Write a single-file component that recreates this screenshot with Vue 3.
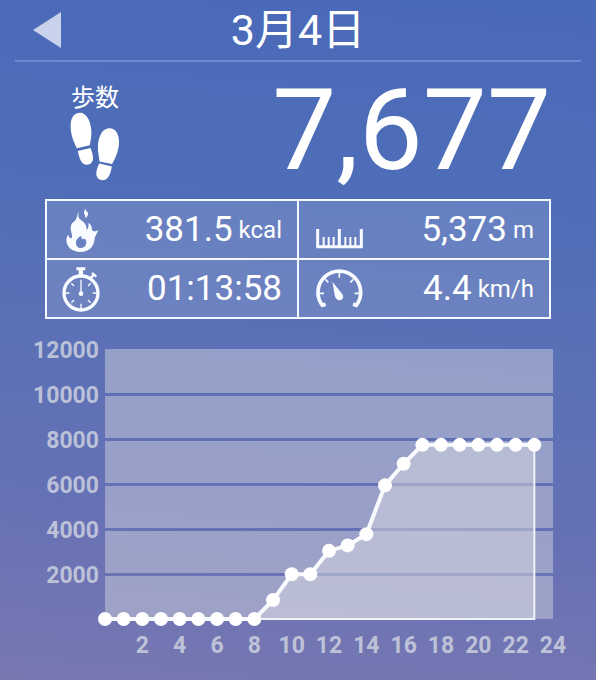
<template>
  <main class="screen">
    <header class="header">
      <button class="prev" type="button" aria-label="前の日">
        <svg viewBox="0 0 28 36" width="28" height="36">
          <path d="M0 18 L28 0 V36 Z" />
        </svg>
      </button>
      <h1 class="date">3月4日</h1>
    </header>

    <section class="steps">
      <div class="steps-label">
        <span>歩数</span>
        <svg class="feet" viewBox="90 110 152 210" width="50" height="70">
          <path d="M119 111 C139 110 153 134 155 166 C156 185 152 198 150 210 L111 219 C103 202 93 183 92 155 C91 130 100 112 119 111 Z" />
          <path d="M114 227 L152 218 C157 228 160 240 160 250 C159 262 152 268 142 269 C126 269 119 254 114 227 Z" />
          <path d="M212 158 C231 159 240 180 239 204 C237 232 226 250 218 267 L180 259 C178 244 174 229 175 209 C178 177 191 157 212 158 Z" />
          <path d="M179 265 L217 274 C213 301 204 316 188 316 C177 315 170 306 170 296 C170 285 174 275 179 265 Z" />
        </svg>
      </div>
      <strong class="steps-count">7,677</strong>
    </section>

    <table class="metrics">
      <tbody>
        <tr>
          <td>
            <div class="metric">
              <svg class="icon" viewBox="54 18 168 171">
                <path fill-rule="evenodd" d="M117 51 C113 63 115 70 124 76 C135 84 140 91 140 105 C145 101 147 92 145 84 C154 88 155 96 156 104 C161 112 167 109 174 106 C171 118 165 122 164 132 C161 156 147 171 121 171 C97 171 80 157 79 136 C79 130 81 123 84 119 C86 125 89 129 95 130 C99 118 91 110 92 96 C94 83 101 82 107 74 C112 66 111 58 117 51 Z M124 122 C115 127 108 133 108 144 C108 153 114 159 123 159 C133 159 139 152 139 142 C139 134 134 130 131 132 C128 134 123 129 124 122 Z" />
                <path d="M137 41 C132 49 130 53 134 59 C137 63 136 66 135 70 C143 65 146 59 143 52 C140 48 137 46 137 41 Z" />
              </svg>
              <span class="value">381.5</span>
              <span class="unit">kcal</span>
            </div>
          </td>
          <td>
            <div class="metric">
              <svg class="icon" viewBox="60 18 168 171">
                <path class="stroke" stroke-width="9" d="M83 102 V155 H214 V102 M148 102 V155" />
                <path class="stroke" stroke-width="6" d="M101 126 V153 M116 126 V153 M131 126 V153 M166 126 V153 M181 126 V153 M196 126 V153" />
              </svg>
              <span class="value">5,373</span>
              <span class="unit">m</span>
            </div>
          </td>
        </tr>
        <tr>
          <td>
            <div class="metric">
              <svg class="icon" viewBox="54 195 168 171">
                <circle class="stroke" stroke-width="10" cx="123" cy="294" r="51" />
                <path d="M109 217 H136 V226 H129 V242 H116 V226 H109 Z" />
                <path class="stroke" stroke-width="7" d="M153 248 L162 239" />
                <path class="stroke" stroke-width="7" d="M156 234 L169 245" />
                <path class="stroke" stroke-width="4" d="M123 295 V254" />
                <path class="stroke" stroke-width="4" d="M123 326 V342 M75 294 H88 M158 294 H171 M94 265 L102 273 M152 265 L144 273 M94 323 L102 315 M152 323 L144 315" />
                <circle cx="123" cy="296" r="7" />
              </svg>
              <span class="value">01:13:58</span>
            </div>
          </td>
          <td>
            <div class="metric">
              <svg class="icon" viewBox="60 195 168 171">
                <path class="stroke" stroke-width="11" d="M107 328 L97 331 A64 64 0 1 1 199 331 L189 328" />
                <path class="stroke" stroke-width="5" d="M148 232 V248 M88 295 H102 M194 295 H208 M106 253 L115 262 M190 253 L181 262" />
                <path d="M127 260 L156 296 C162 304 160 312 152 315 C143 318 137 312 135 304 Z" />
              </svg>
              <span class="value">4.4</span>
              <span class="unit">km/h</span>
            </div>
          </td>
        </tr>
      </tbody>
    </table>

    <svg class="chart" viewBox="0 0 596 340" role="img" aria-label="時間別の歩数">
      <rect
        v-for="band in bands"
        :key="band"
        class="band"
        :x="left"
        :y="bandTop(band)"
        :width="x(24) - left"
        :height="bandBottom(band) - bandTop(band)"
      />
      <text v-for="v in bands" :key="v" class="tick tick-y" x="99" :y="y(v) + 9">{{ v }}</text>
      <text v-for="h in 12" :key="h" class="tick tick-x" :x="x(h * 2)" :y="y(0) + 34">{{ h * 2 }}</text>

      <polygon class="area" :points="areaPoints" />
      <polyline class="line" :points="linePoints" />
      <circle v-for="(v, h) in hourly" :key="h" class="dot" :cx="x(h)" :cy="y(v)" r="7" />
    </svg>
  </main>
</template>

<script setup>
import { computed } from 'vue';

// 0時〜23時の累計歩数
const hourly = [
  0, 0, 0, 0, 0, 0, 0, 0, 0, 840, 1990, 1990,
  3030, 3270, 3770, 5940, 6900, 7740, 7740, 7740, 7740, 7740, 7740, 7740
];

const bands = [12000, 10000, 8000, 6000, 4000, 2000];
const left = 105;

const x = (hour) => left + (hour * 448) / 24;
const y = (value) => 300 - (value * 270) / 12000;

// 帯の間を3px空けて目盛線に見せる
const bandTop = (v) => (v === 12000 ? y(v) : y(v) + 2);
const bandBottom = (v) => (v === 2000 ? y(0) : y(v - 2000) - 1);

const linePoints = computed(() => hourly.map((v, h) => `${x(h)},${y(v)}`).join(' '));
const areaPoints = computed(() => `${linePoints.value} ${x(23)},${y(0)} ${x(0)},${y(0)}`);
</script>

<style>
body {
  margin: 0;
}
</style>

<style scoped>
.screen {
  min-height: 100vh;
  box-sizing: border-box;
  overflow: hidden;
  color: #fff;
  font-family: Roboto, "Noto Sans CJK JP", sans-serif;
  background: linear-gradient(185deg, #4969b9 0%, #4f6eb8 30%, #5b70b6 52%, #6671b5 75%, #7878b1 100%);
}

.header {
  position: relative;
  height: 60px;
  margin: 0 15px;
  border-bottom: 2px solid #6c89cf;
}

/* 戻るボタンは中央のタイトルに重ねて左端に置く */
.prev {
  position: absolute;
  left: 18px;
  top: 12px;
  padding: 0;
  border: 0;
  background: none;
  cursor: pointer;
}

.prev svg {
  display: block;
  fill: #c8d2ea;
}

.date {
  margin: 0;
  font-size: 43px;
  font-weight: 400;
  line-height: 60px;
  text-align: center;
}

.steps {
  display: flex;
  justify-content: space-between;
  height: 137px;
  padding: 0 45px 0 70px;
}

.steps-label {
  display: flex;
  flex-direction: column;
  align-items: center;
  padding-top: 22px;
  font-size: 24px;
  line-height: 28px;
}

.feet {
  fill: #fff;
}

.steps-count {
  font-size: 114px;
  font-weight: 400;
  line-height: 137px;
}

.metrics {
  width: calc(100% - 90px);
  margin: 0 45px;
  table-layout: fixed;
  border-collapse: collapse;
  background: rgba(255, 255, 255, 0.13);
}

.metrics td {
  padding: 0 15px 0 11px;
  border: 2px solid #f4f8ff;
}

.metric {
  display: flex;
  align-items: center;
  height: 57px;
}

.icon {
  flex: none;
  width: 56px;
  height: 57px;
  fill: #f8fbff;
}

.stroke {
  fill: none;
  stroke: #f8fbff;
}

.value {
  flex: 1;
  font-size: 35px;
  text-align: right;
}

.unit {
  margin-left: 6px;
  font-size: 24px;
}

.chart {
  display: block;
  width: 100%;
}

.band {
  fill: #cecfdb;
  fill-opacity: 0.5;
}

.tick {
  fill: #d4d8e2;
  fill-opacity: 0.8;
  font-size: 23px;
  font-weight: 700;
}

.tick-y {
  text-anchor: end;
}

.tick-x {
  text-anchor: middle;
}

.area {
  fill: #d6d8e0;
  fill-opacity: 0.5;
  stroke: #f0f2fa;
  stroke-width: 2;
}

.line {
  fill: none;
  stroke: #f8fafe;
  stroke-width: 4;
  stroke-linejoin: round;
}

.dot {
  fill: #fff;
}
</style>
